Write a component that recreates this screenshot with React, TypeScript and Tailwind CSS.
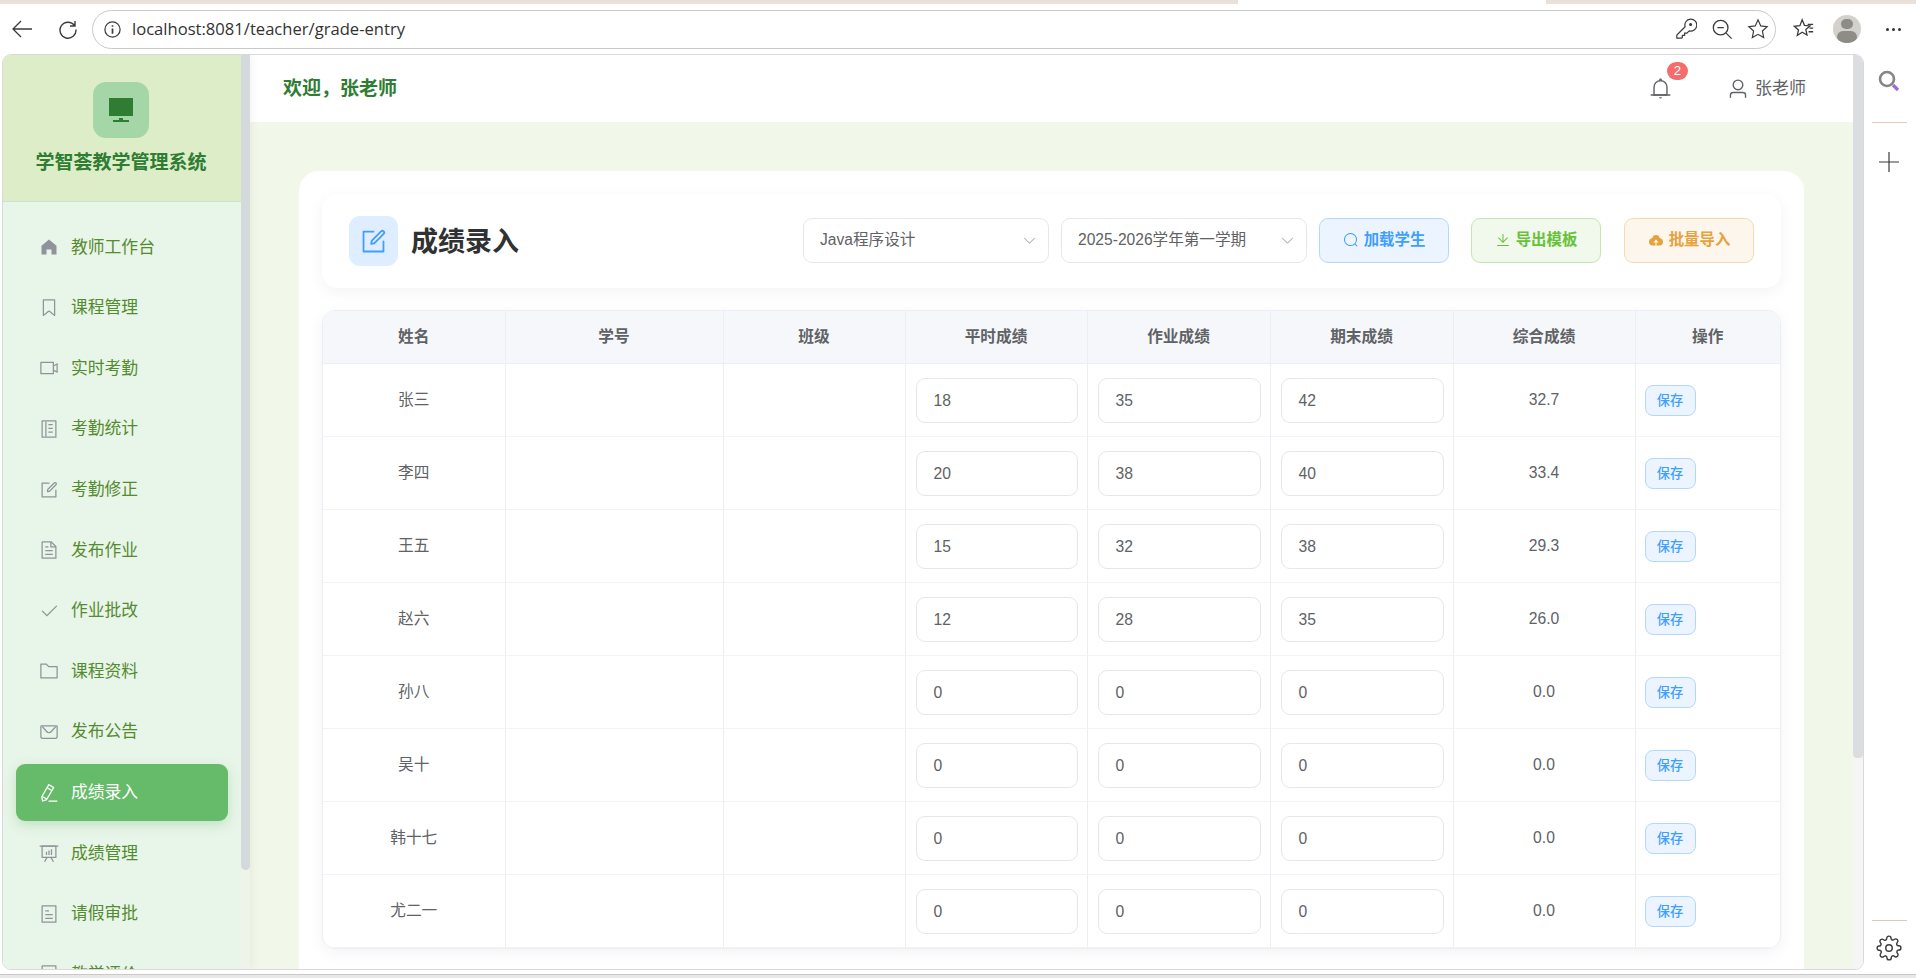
import React from "react";

const EP: Record<string, string[]> = {
  home: ["M512 128 128 447.936V896h255.936V640H640v256h255.936V447.936z"],
  tag: [
    "M256 128v698.88l196.032-156.864a96 96 0 0 1 119.936 0L768 826.816V128zm-32-64h576a32 32 0 0 1 32 32v797.44a32 32 0 0 1-51.968 24.96L531.968 720a32 32 0 0 0-39.936 0L243.968 918.4A32 32 0 0 1 192 893.44V96a32 32 0 0 1 32-32",
  ],
  video: [
    "M704 768V256H128v512zm64-416 192-96v512l-192-96v128a32 32 0 0 1-32 32H96a32 32 0 0 1-32-32V224a32 32 0 0 1 32-32h640a32 32 0 0 1 32 32zm0 71.552v176.896l128 64V359.552z",
  ],
  notebook: [
    "M192 128v768h640V128zm-32-64h704a32 32 0 0 1 32 32v832a32 32 0 0 1-32 32H160a32 32 0 0 1-32-32V96a32 32 0 0 1 32-32",
    "M320 128h64v768h-64zM480 256h224v64H480zm0 192h224v64H480zm0 192h224v64H480z",
  ],
  edit: [
    "M832 512a32 32 0 1 1 64 0v352a32 32 0 0 1-32 32H160a32 32 0 0 1-32-32V160a32 32 0 0 1 32-32h352a32 32 0 0 1 0 64H192v640h640z",
    "m469.952 554.24 52.8-7.552L847.104 222.4a32 32 0 1 0-45.248-45.248L477.44 501.44l-7.552 52.8zm422.4-422.4a96 96 0 0 1 0 135.808l-331.84 331.84a32 32 0 0 1-18.112 9.088L436.8 623.68a32 32 0 0 1-36.224-36.224l15.104-105.6a32 32 0 0 1 9.024-18.112l331.904-331.84a96 96 0 0 1 135.744 0z",
  ],
  doc: [
    "M832 384H576V128H192v768h640zm-26.496-64L640 154.496V320zM160 64h480l256 256v608a32 32 0 0 1-32 32H160a32 32 0 0 1-32-32V96a32 32 0 0 1 32-32m160 448h384v64H320zm0-192h160v64H320zm0 384h384v64H320z",
  ],
  check: [
    "M406.656 706.944 195.84 496.256a32 32 0 1 0-45.248 45.248l256 256 512-512a32 32 0 0 0-45.248-45.248L406.592 706.944z",
  ],
  folder: [
    "M128 192v640h768V320H485.76L357.504 192zm-32-64h287.872l128.384 128H928a32 32 0 0 1 32 32v576a32 32 0 0 1-32 32H96a32 32 0 0 1-32-32V160a32 32 0 0 1 32-32",
  ],
  message: [
    "M128 224v512a64 64 0 0 0 64 64h640a64 64 0 0 0 64-64V224zm0-64h768a64 64 0 0 1 64 64v512a128 128 0 0 1-128 128H192A128 128 0 0 1 64 736V224a64 64 0 0 1 64-64",
    "M904 224 656.512 506.88a192 192 0 0 1-289.024 0L120 224zm-698.944 0 210.56 240.704a128 128 0 0 0 192.704 0L818.944 224H205.056",
  ],
  pen: [
    "m199.04 672.64 193.984 112 224-387.968-193.92-112-224 388.032zm-23.872 60.16 32.896 148.288 144.896-45.696zM455.04 229.248l193.92 112 56.704-98.112-193.984-112-56.64 98.112zM104.32 708.8l384-665.024 304.768 175.936L409.152 884.8h.064l-248.448 78.336zm384 254.272v-64h448v64h-448z",
  ],
  board: [
    "M32 128h960v64H32z",
    "M192 192v512h640V192zm-64-64h768v640H128z",
    "M322.176 960H248.32l144.64-250.56 55.424 32zm453.888 0h-73.856L576 741.44l55.424-32z",
    "M352 448h64v160h-64zm128-64h64v224h-64zm128-64h64v288h-64z",
  ],
  tickets: [
    "M192 128v768h640V128zm-32-64h704a32 32 0 0 1 32 32v832a32 32 0 0 1-32 32H160a32 32 0 0 1-32-32V96a32 32 0 0 1 32-32m160 448h384v64H320zm0-192h192v64H320zm0 384h384v64H320z",
  ],
  platform: ["M448 832v-64h128v64h192v64H256v-64zM128 704V128h768v576z"],
  search: [
    "m795.904 750.72 124.992 124.928a32 32 0 0 1-45.248 45.248L750.656 795.904a416 416 0 1 1 45.248-45.248zM480 832a352 352 0 1 0 0-704 352 352 0 0 0 0 704",
  ],
  download: [
    "M160 832h704a32 32 0 1 1 0 64H160a32 32 0 1 1 0-64m384-253.696 236.288-236.352 45.248 45.248L508.8 704 192 387.2l45.248-45.248L480 584.704V128h64z",
  ],
  upload: [
    "M544 864V672h128L512 480 352 672h128v192H320v-1.6c-5.376.32-10.496 1.6-16 1.6A240 240 0 0 1 64 624c0-123.136 93.12-223.488 212.608-237.248A239.808 239.808 0 0 1 512 192a239.872 239.872 0 0 1 235.456 194.752c119.488 13.76 212.48 114.112 212.48 237.248a240 240 0 0 1-240 240c-5.376 0-10.56-1.28-16-1.6v1.6z",
  ],
  bell: [
    "M512 64a64 64 0 0 1 64 64v64H448v-64a64 64 0 0 1 64-64",
    "M256 768h512V448a256 256 0 1 0-512 0zm256-640a320 320 0 0 1 320 320v384H192V448a320 320 0 0 1 320-320",
    "M96 768h832q32 0 32 32t-32 32H96q-32 0-32-32t32-32m352 128h128a64 64 0 0 1-128 0",
  ],
  user: [
    "M512 512a192 192 0 1 0 0-384 192 192 0 0 0 0 384m0 64a256 256 0 1 1 0-512 256 256 0 0 1 0 512m320 320v-96a96 96 0 0 0-96-96H288a96 96 0 0 0-96 96v96a32 32 0 1 1-64 0v-96a160 160 0 0 1 160-160h448a160 160 0 0 1 160 160v96a32 32 0 1 1-64 0",
  ],
  arrow: [
    "M831.872 340.864 512 652.672 192.128 340.864a30.592 30.592 0 0 0-42.752 0 29.12 29.12 0 0 0 0 41.6L489.664 714.24a32 32 0 0 0 44.672 0l340.288-331.712a29.12 29.12 0 0 0 0-41.728 30.592 30.592 0 0 0-42.752 0z",
  ],
};

const Icon = ({ name, className }: { name: string; className: string }) => (
  <svg viewBox="0 0 1024 1024" fill="currentColor" className={className}>
    {EP[name].map((d, i) => (
      <path key={i} d={d} />
    ))}
  </svg>
);

const menu = [
  ["home", "教师工作台"],
  ["tag", "课程管理"],
  ["video", "实时考勤"],
  ["notebook", "考勤统计"],
  ["edit", "考勤修正"],
  ["doc", "发布作业"],
  ["check", "作业批改"],
  ["folder", "课程资料"],
  ["message", "发布公告"],
  ["pen", "成绩录入"],
  ["board", "成绩管理"],
  ["tickets", "请假审批"],
  ["tickets", "教学评价"],
];

const students = [
  ["张三", "18", "35", "42", "32.7"],
  ["李四", "20", "38", "40", "33.4"],
  ["王五", "15", "32", "38", "29.3"],
  ["赵六", "12", "28", "35", "26.0"],
  ["孙八", "0", "0", "0", "0.0"],
  ["吴十", "0", "0", "0", "0.0"],
  ["韩十七", "0", "0", "0", "0.0"],
  ["尤二一", "0", "0", "0", "0.0"],
];

const BrowserBar = () => (
  <div className="h-[50px] shrink-0 flex items-center bg-white text-[#3b3b3b]">
    <div className="w-[92px] shrink-0 flex items-center pl-[11px]">
      <svg viewBox="0 0 22 22" className="w-[22px] h-[22px]" fill="none" stroke="currentColor" strokeWidth="1.3">
        <path d="M21 11H2M10 3l-8 8 8 8" />
      </svg>
      <svg viewBox="0 0 20 20" className="w-5 h-5 ml-[25px]" fill="none" stroke="currentColor" strokeWidth="1.4">
        <path d="M16.5 6.5A8 8 0 1 0 18 10.5M17 2v5h-5" />
      </svg>
    </div>
    <div className="w-[1684px] h-[39px] shrink-0 flex items-center rounded-full border border-[#c9c9c9] pl-[10px] pr-[6px]">
      <svg viewBox="0 0 20 20" className="w-[19px] h-[19px]" fill="none" stroke="currentColor" strokeWidth="1.3">
        <circle cx="10" cy="10" r="8" />
        <path d="M10 9v5.5M10 5.500v1.600" strokeWidth="1.8" />
      </svg>
      <span className="ml-[10px] text-[16.600px] text-[#333] font-['Open_Sans',sans-serif]">localhost:8081/teacher/grade-entry</span>
      <div className="ml-auto flex items-center gap-[14px]">
        <svg viewBox="0 0 24 24" className="w-[22px] h-[22px]" fill="none" stroke="currentColor" strokeWidth="1.3">
          <path d="M2 22v-3.5l9-9a6.5 6.5 0 1 1 4.5 4.5L13 16.5h-2.5V19H8v2.5l-1 .5z" />
          <circle cx="17" cy="7" r="1" fill="currentColor" />
        </svg>
        <svg viewBox="0 0 24 24" className="w-[22px] h-[22px]" fill="none" stroke="currentColor" strokeWidth="1.4">
          <circle cx="10.5" cy="10.5" r="8" />
          <path d="M7 10.5h7M16.5 16.5l6 6" />
        </svg>
        <svg viewBox="0 0 24 24" className="w-[22px] h-[22px]" fill="none" stroke="currentColor" strokeWidth="1.3">
          <path d="M12 2l3 6.6 7 .8-5.2 4.8 1.4 7.2L12 17.800 5.800 21.400l1.400-7.200L2 9.400l7-.8z" />
        </svg>
      </div>
    </div>
    <div className="flex-1 flex items-center pl-[17px]">
      <svg viewBox="0 0 24 24" className="w-[22px] h-[22px]" fill="none" stroke="currentColor" strokeWidth="1.4">
        <path d="M10 2l2.500 6 6 .6-4.500 4 1.300 6L10 15.500 4.700 19l1.300-6-4.500-4 6-.6zM16 7h6M18 11h4M17 15h5" />
      </svg>
      <div className="ml-[18px] w-7 h-7 rounded-full bg-[#d3d1cc] overflow-hidden flex flex-col items-center">
        <div className="w-[12px] h-[12px] rounded-full bg-[#8f8b86] mt-[4px]" />
        <div className="w-[20px] h-[14px] rounded-full bg-[#8f8b86] mt-[2px]" />
      </div>
      <div className="ml-[25px] flex gap-[3px]">
        <i className="w-[3px] h-[3px] rounded-full bg-[#333]" />
        <i className="w-[3px] h-[3px] rounded-full bg-[#333]" />
        <i className="w-[3px] h-[3px] rounded-full bg-[#333]" />
      </div>
    </div>
  </div>
);

const Sidebar = () => (
  <div className="w-[247px] shrink-0 flex relative z-10 shadow-[2px_0_8px_rgba(0,0,0,0.05)]">
    <div className="w-[238px] flex flex-col bg-[#e8f5e9] overflow-hidden">
      <div className="h-[147px] shrink-0 flex flex-col items-center bg-[#dcedc8] border-b border-[#c8e6c9] pt-[27px] pr-[2px]">
        <div className="w-14 h-14 rounded-[13px] bg-[#a5d6a7] flex items-center justify-center text-[#2e7d32]">
          <Icon name="platform" className="w-8 h-8" />
        </div>
        <div className="mt-[12px] text-[19px] leading-[26px] font-bold text-[#2e7d32]">学智荟教学管理系统</div>
      </div>
      <nav className="flex flex-col gap-[4px] px-[13px] pt-[17px]">
        {menu.map(([icon, label], i) => {
          const active = label === "成绩录入";
          return (
            <div
              key={i}
              className={
                active
                  ? "h-[56.600px] shrink-0 flex items-center gap-[12px] pl-[23px] rounded-[9px] bg-[#66bb6a] text-white shadow-[0_4px_12px_rgba(102,187,106,0.3)]"
                  : "h-[56.600px] shrink-0 flex items-center gap-[12px] pl-[23px] rounded-[9px] text-[#558b2f]"
              }
            >
              <Icon name={icon} className={active ? "w-[20px] h-[20px] text-white" : "w-[20px] h-[20px] text-[#909399]"} />
              <span className="text-[16.800px]">{label}</span>
            </div>
          );
        })}
      </nav>
    </div>
    <div className="w-[9px] bg-[#eef4ea]">
      <div className="h-[815px] rounded-b-[5px] bg-[#d4d9dc]" />
    </div>
  </div>
);

const Button = ({ icon, label, className }: { icon: string; label: string; className: string }) => (
  <button className={"w-[130px] h-[45px] flex items-center justify-center gap-[5px] rounded-[9px] border text-[15.400px] font-semibold " + className}>
    <Icon name={icon} className="w-[16px] h-[16px]" />
    {label}
  </button>
);

const Select = ({ label, className }: { label: string; className: string }) => (
  <div className={"h-[45px] flex items-center justify-between pl-[16px] pr-[11px] rounded-[9px] border border-[#e4e7ed] bg-white text-[15.600px] text-[#606266] " + className}>
    {label}
    <Icon name="arrow" className="w-[15px] h-[15px] text-[#a8abb2]" />
  </div>
);

const Th = ({ children, className }: { children: string; className: string }) => (
  <th className={"border-r border-b border-[#ebeef5] font-bold text-[15.700px] text-[#606266] " + className}>{children}</th>
);

const ScoreCell = ({ value }: { value: string }) => (
  <td className="border-r border-b border-r-[#ebeef5] border-b-[#f2f3f6] pl-[10px] pr-[9px] pt-[2px]">
    <div className="h-[45px] flex items-center pl-[17px] rounded-[9px] border border-[#e4e7ed] text-[15.700px] text-[#606266]">{value}</div>
  </td>
);

const Table = () => (
  <div className="mt-[22px] rounded-[13px] overflow-hidden border border-[#ebeef5] shadow-[0_4px_16px_rgba(0,0,0,0.05)]">
    <table className="w-full table-fixed border-collapse">
      <thead className="bg-[#f5f7fa]">
        <tr className="h-[52px]">
          <Th className="w-[182px]">姓名</Th>
          <Th className="w-[218px]">学号</Th>
          <Th className="w-[182px]">班级</Th>
          <Th className="w-[182px]">平时成绩</Th>
          <Th className="w-[183px]">作业成绩</Th>
          <Th className="w-[183px]">期末成绩</Th>
          <Th className="w-[182px]">综合成绩</Th>
          <Th className="border-r-0">操作</Th>
        </tr>
      </thead>
      <tbody>
        {students.map((s, i) => (
          <tr key={i} className="h-[73px] text-[15.700px] text-[#606266] text-center">
            <td className="border-r border-b border-r-[#ebeef5] border-b-[#f2f3f6]">{s[0]}</td>
            <td className="border-r border-b border-r-[#ebeef5] border-b-[#f2f3f6]" />
            <td className="border-r border-b border-r-[#ebeef5] border-b-[#f2f3f6]" />
            <ScoreCell value={s[1]} />
            <ScoreCell value={s[2]} />
            <ScoreCell value={s[3]} />
            <td className="border-r border-b border-r-[#ebeef5] border-b-[#f2f3f6]">{s[4]}</td>
            <td className="border-b border-[#f2f3f6] pl-[9px] pt-[2px] text-left">
              <button className="w-[51px] h-[31px] rounded-[8px] border border-[#b3d8ff] bg-[#ecf5ff] text-[13.200px] font-medium text-[#409eff]">保存</button>
            </td>
          </tr>
        ))}
      </tbody>
    </table>
  </div>
);

const Main = () => (
  <div className="flex-1 flex flex-col min-w-0">
    <header className="h-[67px] shrink-0 flex items-center bg-white pl-[33px] pr-[47px]">
      <span className="text-[19px] font-bold text-[#2e7d32] pt-[2px]">欢迎，张老师</span>
      <div className="ml-auto relative">
        <Icon name="bell" className="w-[23px] h-[23px] text-[#606266]" />
        <span className="absolute -top-[15px] left-[18px] w-[21px] h-[18px] rounded-full bg-[#f56c6c] text-white text-[13.200px] leading-[18px] text-center">2</span>
      </div>
      <div className="ml-[55px] flex items-center gap-[6px] text-[17px] text-[#606266]">
        <Icon name="user" className="w-[22px] h-[22px]" />
        张老师
      </div>
    </header>
    <main className="flex-1 min-h-0 overflow-hidden bg-[#f1f8e9] pt-[49px] px-[49px]">
      <div className="bg-white rounded-t-[20px] pt-[23px] px-[23px] pb-6">
        <div className="h-[94px] flex items-center pl-[27px] pr-[27px] rounded-[15px] bg-white shadow-[0_4px_16px_rgba(0,0,0,0.05)]">
          <div className="w-[49px] h-[50px] rounded-[11px] bg-[#deedff] flex items-center justify-center text-[#409eff]">
            <Icon name="edit" className="w-[29px] h-[29px]" />
          </div>
          <h1 className="ml-[13px] pt-[3px] text-[27px] font-bold text-[#303133]">成绩录入</h1>
          <div className="ml-auto -mt-[2px] flex items-center gap-[12px]">
            <Select label="Java程序设计" className="w-[246px]" />
            <Select label="2025-2026学年第一学期" className="w-[246px]" />
          </div>
          <div className="ml-[12px] -mt-[2px] flex items-center gap-[23px]">
            <Button icon="search" label="加载学生" className="bg-[#ecf5ff] border-[#b3d8ff] text-[#409eff]" />
            <Button icon="download" label="导出模板" className="-ml-[1px] bg-[#f0f9eb] border-[#c2e7b0] text-[#67c23a]" />
            <Button icon="upload" label="批量导入" className="bg-[#fdf6ec] border-[#f5dab1] text-[#e6a23c]" />
          </div>
        </div>
        <Table />
      </div>
    </main>
  </div>
);

const EdgeRail = () => (
  <div className="flex-1 flex flex-col items-center text-[#3b3b3b]">
    <svg viewBox="0 0 24 24" className="mt-[15px] w-[24px] h-[24px]" fill="none">
      <circle cx="10" cy="10" r="7" stroke="#858585" strokeWidth="2.600" />
      <path d="M16 16l5 5" stroke="#9b6fd1" strokeWidth="3.400" />
    </svg>
    <div className="mt-[29px] w-[35px] h-px bg-[#e3c9b8]" />
    <svg viewBox="0 0 20 20" className="mt-[29px] w-5 h-5" fill="none" stroke="currentColor" strokeWidth="1.200">
      <path d="M10 0v20M0 10h20" />
    </svg>
    <div className="mt-auto w-[35px] h-px bg-[#e3c9b8]" />
    <svg viewBox="0 0 24 24" className="mt-[14px] mb-[10px] w-[26px] h-[26px]" fill="none" stroke="currentColor" strokeWidth="1.300">
      <circle cx="12" cy="12" r="3" />
      <path d="M19.400 15a1.650 1.650 0 0 0 .33 1.820l.06.06a2 2 0 1 1-2.830 2.830l-.06-.06a1.650 1.650 0 0 0-2.800 1.170V21a2 2 0 1 1-4 0v-.09a1.650 1.650 0 0 0-2.800-1.170l-.06.06a2 2 0 1 1-2.830-2.830l.06-.06a1.650 1.650 0 0 0-1.170-2.800H3a2 2 0 1 1 0-4h.09a1.650 1.650 0 0 0 1.170-2.800l-.06-.06a2 2 0 1 1 2.830-2.830l.06.06a1.650 1.650 0 0 0 2.800-1.170V3a2 2 0 1 1 4 0v.09a1.650 1.650 0 0 0 2.800 1.170l.06-.06a2 2 0 1 1 2.830 2.830l-.06.06a1.650 1.650 0 0 0 1.170 2.800H21a2 2 0 1 1 0 4h-.09a1.650 1.650 0 0 0-1.510 1z" />
    </svg>
  </div>
);

export default function App() {
  return (
    <div className="w-[1916px] h-[978px] overflow-hidden flex flex-col bg-white font-['Liberation_Sans','Noto_Sans_CJK_SC',sans-serif]">
      <div className="h-1 shrink-0 flex">
        <div className="w-[1238px] bg-[#e8e0da]" />
        <div className="w-[308px] bg-white" />
        <div className="flex-1 bg-[#e8e0da]" />
      </div>
      <BrowserBar />
      <div className="flex-1 min-h-0 flex">
        <div className="w-[1862px] h-[916px] shrink-0 ml-[2px] -mr-[2px] flex rounded-[9px] overflow-hidden border border-[#d9d9d9]">
          <Sidebar />
          <Main />
          <div className="w-[10px] shrink-0 bg-[#f5f5f5]">
            <div className="h-[703px] rounded-b-[4px] bg-[#dcdde1]" />
          </div>
        </div>
        <EdgeRail />
      </div>
      <div className="h-[3px] shrink-0 bg-white" />
      <div className="h-1 shrink-0 border-t border-[#c8c8c8] bg-[#e8e8e8]" />
    </div>
  );
}
